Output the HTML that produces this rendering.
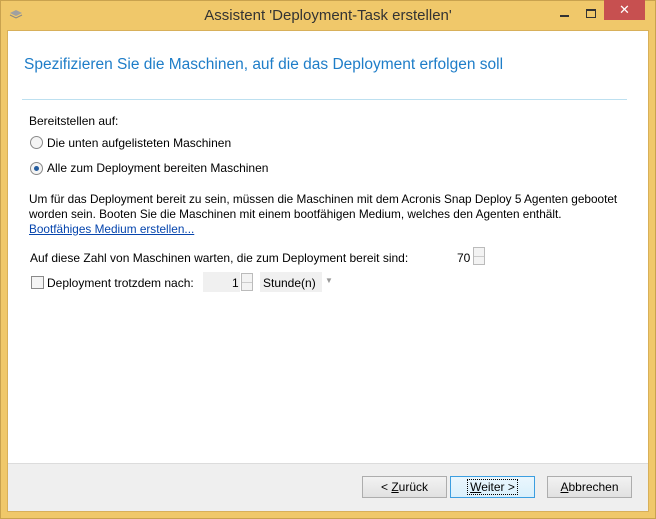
<!DOCTYPE html>
<html><head><meta charset="utf-8"><style>
body{margin:0;width:656px;height:519px;overflow:hidden;font-family:"Liberation Sans",sans-serif;font-size:12px;color:#000}
.win{position:absolute;left:0;top:0;width:654px;height:517px;background:#f0c86a;border:1px solid #c9a24e}
.client{position:absolute;left:7px;top:30px;width:640px;height:480px;background:#fff;border:1px solid #d8b05a}
.t{position:absolute;white-space:nowrap}
.btn{position:absolute;top:476px;height:22px;border:1px solid #adadad;background:linear-gradient(#f2f2f2,#e1e1e1);text-align:center;line-height:20px;font-size:12px;box-sizing:border-box}
.radio{position:absolute;width:11px;height:11px;border-radius:50%;border:1px solid #8a8a8a;background:#f4f4f4}
.spin{position:absolute;width:12px;height:18px;border:1px solid #bbb;background:#f3f3f3;box-sizing:border-box}
.spin:after{content:"";position:absolute;left:0;right:0;top:8px;border-top:1px solid #ccc}
</style></head><body>
<div class="win"></div>
<svg style="position:absolute;left:9px;top:9px" width="14" height="10"><path d="M1 4 L7 1 L13 4 L7 7Z" fill="#a0a0a0"/><path d="M1 6 L7 9 L13 6" stroke="#888" fill="none"/></svg>
<div class="t" style="left:0;width:656px;text-align:center;top:7px;font-size:15px;color:#333">Assistent 'Deployment-Task erstellen'</div>
<div style="position:absolute;left:560px;top:15px;width:9px;height:2px;background:#333"></div>
<div style="position:absolute;left:586px;top:9px;width:8px;height:6px;border:1px solid #333;border-top-width:2px"></div>
<div style="position:absolute;left:604px;top:0;width:41px;height:20px;background:#c75050;color:#fff;text-align:center;font-size:13px;line-height:20px">✕</div>
<div class="client">
<div style="position:absolute;left:0;right:0;top:432px;bottom:0;background:#efefef;border-top:1px solid #dcdcdc"></div>
</div>
<div class="t" style="left:24px;top:56px;font-size:15.5px;color:#1e7dc8">Spezifizieren Sie die Maschinen, auf die das Deployment erfolgen soll</div>
<div style="position:absolute;left:22px;top:99px;width:605px;height:1px;background:#bde0f0"></div>
<div class="t" style="left:29px;top:114px">Bereitstellen auf:</div>
<div class="radio" style="left:30px;top:136px"></div>
<div class="t" style="left:47px;top:136px">Die unten aufgelisteten Maschinen</div>
<div class="radio" style="left:30px;top:162px"><div style="position:absolute;left:3px;top:3px;width:5px;height:5px;border-radius:50%;background:#245c9e"></div></div>
<div class="t" style="left:47px;top:161px">Alle zum Deployment bereiten Maschinen</div>
<div class="t" style="left:29px;top:192px;line-height:15px;font-size:11.8px">Um für das Deployment bereit zu sein, müssen die Maschinen mit dem Acronis Snap Deploy 5 Agenten gebootet<br>worden sein. Booten Sie die Maschinen mit einem bootfähigen Medium, welches den Agenten enthält.<br><span style="color:#0645ad;text-decoration:underline">Bootfähiges Medium erstellen...</span></div>
<div class="t" style="left:30px;top:251px">Auf diese Zahl von Maschinen warten, die zum Deployment bereit sind:</div>
<div class="t" style="left:457px;top:251px">70</div>
<div class="spin" style="left:473px;top:247px"></div>
<div style="position:absolute;left:31px;top:276px;width:11px;height:11px;border:1px solid #8a8a8a;background:#f4f4f4"></div>
<div class="t" style="left:47px;top:276px">Deployment trotzdem nach:</div>
<div style="position:absolute;left:203px;top:272px;width:37px;height:20px;background:#f0f0f0"></div>
<div class="t" style="left:232px;top:276px">1</div>
<div class="spin" style="left:241px;top:273px"></div>
<div style="position:absolute;left:260px;top:272px;width:62px;height:20px;background:#f0f0f0"></div>
<div class="t" style="left:263px;top:276px">Stunde(n)</div>
<div class="t" style="left:325px;top:276px;font-size:8px;color:#999">▼</div>
<div class="btn" style="left:362px;width:85px">&lt; <u>Z</u>urück</div>
<div class="btn" style="left:450px;width:85px;border-color:#3c9ee0;background:linear-gradient(#eaf6fd,#d9f0fc)"><span style="border:1px dotted #000;padding:0 2px"><u>W</u>eiter &gt;</span></div>
<div class="btn" style="left:547px;width:85px"><u>A</u>bbrechen</div>
</body></html>
